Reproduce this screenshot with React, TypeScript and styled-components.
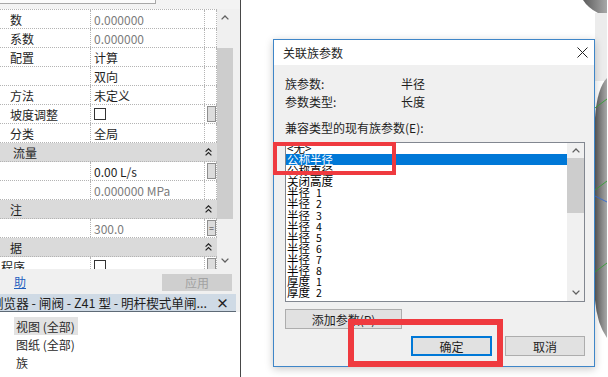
import React from "react";
import styled, { createGlobalStyle } from "styled-components";

const GlobalStyle = createGlobalStyle`
  html, body { margin: 0; padding: 0; width: 608px; height: 377px; overflow: hidden; background: #fff; }
  body { font-family: "Noto Sans CJK SC", "Noto Sans", sans-serif; font-size: 12px; color: #1e1e1e; }
  #root { width: 608px; height: 377px; }
  * { box-sizing: border-box; }
`;

const Page = styled.div`
  display: flex;
  width: 608px;
  height: 377px;
  overflow: hidden;
`;

/* ---------------- left: properties + project browser ---------------- */
const LeftPanel = styled.div`
  width: 241px;
  flex: none;
  display: flex;
  flex-direction: column;
  background: #f0f0f0;
  border-right: 1px solid #474747;
  overflow: hidden;
`;

const TopStrip = styled.div`
  height: 9px;
  flex: none;
  background: #f3f3f3;
`;

const TopBox = styled.div`
  width: 156px;
  height: 4px;
  background: #fbfbfb;
  border-right: 1px solid #a8a8a8;
  border-bottom: 1px solid #a8a8a8;
`;

const PropArea = styled.div`
  height: 260px;
  flex: none;
  display: flex;
  overflow: hidden;
`;

const RowsCol = styled.div`
  width: 217px;
  flex: none;
  background: #fff;
  overflow: hidden;
  border-top: 1px dotted #b4b4b4;
`;

const Row = styled.div`
  display: grid;
  grid-template-columns: 91px 114px 12px;
  height: 19px;
  border-bottom: 1px dotted #b4b4b4;
`;

const Cell = styled.div<{ $pad?: number; $gray?: boolean }>`
  display: flex;
  align-items: center;
  padding-left: ${(p) => p.$pad ?? 0}px;
  border-right: 1px dotted #b4b4b4;
  white-space: nowrap;
  overflow: hidden;
  color: ${(p) => (p.$gray ? "#7c7c7c" : "#1e1e1e")};
  font-size: 12px;
`;

const SectionRow = styled.div<{ $indent: number }>`
  display: flex;
  align-items: center;
  justify-content: space-between;
  height: 19px;
  padding: 0 5px 0 ${(p) => p.$indent}px;
  background: #dadada;
  border-bottom: 1px dotted #b4b4b4;
  font-size: 12px;
`;

const CheckBox = styled.span`
  width: 12px;
  height: 12px;
  border: 1px solid #333;
  background: #fff;
`;

const SmallBtn = styled.span`
  width: 9px;
  height: 16px;
  margin-left: 2px;
  background: #dcdcdc;
  border: 1px solid #8e8e8e;
  display: flex;
  align-items: center;
  justify-content: center;
  font-size: 9px;
  line-height: 1;
  color: #333;
`;

const PropScroll = styled.div`
  width: 16px;
  flex: none;
  display: flex;
  flex-direction: column;
  background: #f0f0f0;
`;

const ArrowBox = styled.div<{ $h: number }>`
  height: ${(p) => p.$h}px;
  flex: none;
  display: flex;
  align-items: center;
  justify-content: center;
`;

const Thumb = styled.div<{ $h: number }>`
  height: ${(p) => p.$h}px;
  flex: none;
  background: #cdcdcd;
`;

const Spacer = styled.div<{ $h?: number }>`
  ${(p) => (p.$h ? `height: ${p.$h}px; flex: none;` : "flex: 1;")}
`;

const Filler = styled.div`
  flex: 1;
  background: #f0f0f0;
`;

const ApplyBar = styled.div`
  height: 25px;
  flex: none;
  display: flex;
  align-items: center;
  justify-content: space-between;
  padding: 0 8px 0 14px;
  background: #f0f0f0;
`;

const HelpLink = styled.a`
  color: #1f5fbf;
  text-decoration: underline;
  font-size: 12px;
`;

const ApplyButton = styled.button`
  width: 70px;
  height: 17px;
  margin-top: 1px;
  border: none;
  background: #cfcfcf;
  color: #a2a2a2;
  font-family: inherit;
  font-size: 12px;
  padding: 0;
`;

const BrowserHeader = styled.div`
  height: 18px;
  flex: none;
  margin-right: 4px;
  display: flex;
  align-items: center;
  justify-content: space-between;
  padding-right: 7px;
  background: #cfdae5;
  border-bottom: 1px solid #5e6a76;
  overflow: hidden;
  white-space: nowrap;
`;

const HeaderText = styled.span`
  margin-left: -9px;
  font-size: 12.6px;
  color: #1e1e1e;
`;

const HeaderClose = styled.span`
  font-size: 13px;
  font-weight: bold;
  color: #222;
`;

const Tree = styled.div`
  flex: 1;
  background: #fff;
  padding-top: 5px;
  display: flex;
  flex-direction: column;
  align-items: flex-start;
`;

const TreeItem = styled.div<{ $selected?: boolean }>`
  height: 18px;
  display: flex;
  align-items: center;
  margin-left: 14px;
  padding: 0 3px 0 2px;
  background: ${(p) => (p.$selected ? "#e2e2e2" : "transparent")};
  color: #2a2a2a;
  font-size: 12px;
`;

/* ---------------- right: 3D view + dialog ---------------- */
const Viewport = styled.div`
  flex: 1;
  position: relative;
  background: #fff;
`;

const ViewCanvas = styled.svg`
  position: absolute;
  inset: 0;
`;

const Dialog = styled.div`
  position: absolute;
  left: 32px;
  top: 39px;
  width: 322px;
  height: 328px;
  border: 1px solid #3f86c8;
  background: #f0f0f0;
  display: flex;
  flex-direction: column;
  box-shadow: 0 2px 8px rgba(0, 0, 0, 0.22);
`;

const TitleBar = styled.div`
  height: 25px;
  flex: none;
  background: #fff;
  display: flex;
  align-items: center;
  justify-content: space-between;
  padding: 0 6px 0 9px;
  font-size: 12px;
  color: #1e1e1e;
`;

const DialogBody = styled.div`
  flex: 1;
  display: flex;
  flex-direction: column;
  padding: 9px 9px 10px 11px;
`;

const ParamRow = styled.div`
  display: grid;
  grid-template-columns: 116px 1fr;
  height: 18px;
  align-items: center;
  font-size: 12px;
`;

const ListLabel = styled.div`
  margin-top: 8px;
  height: 18px;
  display: flex;
  align-items: center;
  font-size: 12px;
`;

const ListBox = styled.div`
  margin-top: 6px;
  height: 160px;
  flex: none;
  display: flex;
  border: 1px solid #828790;
  background: #fff;
`;

const ListItems = styled.div`
  flex: 1;
  overflow: hidden;
  display: flex;
  flex-direction: column;
`;

const ListItem = styled.div<{ $selected?: boolean }>`
  height: 11.1px;
  flex: none;
  display: flex;
  align-items: center;
  padding-left: 1px;
  white-space: pre;
  font-size: 11.5px;
  line-height: 11.1px;
  color: ${(p) => (p.$selected ? "#ffffff" : "#000")};
  background: ${(p) => (p.$selected ? "#0078d7" : "transparent")};
`;

const ItemNum = styled.span`
  margin-left: 6px;
  font-size: 10.5px;
`;

const ListScroll = styled.div`
  width: 17px;
  flex: none;
  display: flex;
  flex-direction: column;
  background: #f0f0f0;
`;

const DlgButton = styled.button<{ $w: number; $primary?: boolean }>`
  width: ${(p) => p.$w}px;
  height: 20px;
  padding: 0;
  background: #e1e1e1;
  border: 1px solid ${(p) => (p.$primary ? "#0078d7" : "#adadad")};
  box-shadow: ${(p) => (p.$primary ? "inset 0 0 0 1px #0078d7" : "none")};
  font-family: inherit;
  font-size: 12px;
  color: #1e1e1e;
`;

const AddRow = styled.div`
  margin-top: 7px;
  display: flex;
`;

const ButtonRow = styled.div`
  margin-top: 7px;
  display: flex;
  justify-content: flex-end;
  gap: 13px;
`;

const RedBox = styled.div<{ $l: number; $t: number; $w: number; $h: number; $b: number }>`
  position: absolute;
  left: ${(p) => p.$l}px;
  top: ${(p) => p.$t}px;
  width: ${(p) => p.$w}px;
  height: ${(p) => p.$h}px;
  border: ${(p) => p.$b}px solid #ef3a3f;
  pointer-events: none;
`;

/* ---------------- icons ---------------- */
const ChevronUp = ({ color = "#606060" }: { color?: string }) => (
  <svg width="8" height="5" viewBox="0 0 8 5">
    <polyline points="0.6,4.4 4,1 7.4,4.4" fill="none" stroke={color} strokeWidth="1.3" />
  </svg>
);

const ChevronDown = ({ color = "#606060" }: { color?: string }) => (
  <svg width="8" height="5" viewBox="0 0 8 5">
    <polyline points="0.6,0.6 4,4 7.4,0.6" fill="none" stroke={color} strokeWidth="1.3" />
  </svg>
);

const DoubleChevron = () => (
  <svg width="7" height="8" viewBox="0 0 7 8">
    <polyline points="0.6,3.6 3.5,0.8 6.4,3.6" fill="none" stroke="#222" strokeWidth="1.2" />
    <polyline points="0.6,7.4 3.5,4.6 6.4,7.4" fill="none" stroke="#222" strokeWidth="1.2" />
  </svg>
);

const CloseX = () => (
  <svg width="11" height="11" viewBox="0 0 11 11">
    <line x1="0.5" y1="0.5" x2="10.5" y2="10.5" stroke="#222" strokeWidth="1" />
    <line x1="10.5" y1="0.5" x2="0.5" y2="10.5" stroke="#222" strokeWidth="1" />
  </svg>
);

type PropRow =
  | { kind: "row"; label: string; value?: string; gray?: boolean; check?: boolean; btn?: string }
  | { kind: "section"; label: string; indent: number };

const propRows: PropRow[] = [
  { kind: "row", label: "数", value: "0.000000", gray: true },
  { kind: "row", label: "系数", value: "0.000000", gray: true },
  { kind: "row", label: "配置", value: "计算" },
  { kind: "row", label: "", value: "双向" },
  { kind: "row", label: "方法", value: "未定义" },
  { kind: "row", label: "坡度调整", check: true, btn: "" },
  { kind: "row", label: "分类", value: "全局" },
  { kind: "section", label: "流量", indent: 13 },
  { kind: "row", label: "", value: "0.00 L/s", btn: "" },
  { kind: "row", label: "", value: "0.000000 MPa", gray: true },
  { kind: "section", label: "注", indent: 10 },
  { kind: "row", label: "", value: "300.0", gray: true, btn: "=" },
  { kind: "section", label: "据", indent: 10 },
  { kind: "row", label: "程序", check: true, btn: "" },
];

const listItems: [string, string?][] = [
  ["<无>"],
  ["公称半径"],
  ["公称直径"],
  ["关闭高度"],
  ["半径", "1"],
  ["半径", "2"],
  ["半径", "3"],
  ["半径", "4"],
  ["半径", "5"],
  ["半径", "6"],
  ["半径", "7"],
  ["半径", "8"],
  ["厚度", "1"],
  ["厚度", "2"],
];

export default function App() {
  return (
    <>
      <GlobalStyle />
      <Page>
        <LeftPanel>
          <TopStrip>
            <TopBox />
          </TopStrip>
          <PropArea>
            <RowsCol>
              {propRows.map((r, i) =>
                r.kind === "section" ? (
                  <SectionRow key={i} $indent={r.indent}>
                    <span>{r.label}</span>
                    <DoubleChevron />
                  </SectionRow>
                ) : (
                  <Row key={i}>
                    <Cell $pad={r.label === "程序" ? 1 : 10}>{r.label}</Cell>
                    <Cell $pad={3} $gray={r.gray}>
                      {r.check ? <CheckBox /> : r.value}
                    </Cell>
                    <Cell>{r.btn !== undefined && <SmallBtn>{r.btn}</SmallBtn>}</Cell>
                  </Row>
                )
              )}
            </RowsCol>
            <PropScroll>
              <ArrowBox $h={17}>
                <ChevronUp />
              </ArrowBox>
              <Spacer $h={22} />
              <Thumb $h={171} />
              <Spacer />
              <ArrowBox $h={17}>
                <ChevronDown />
              </ArrowBox>
            </PropScroll>
            <Filler />
          </PropArea>
          <ApplyBar>
            <HelpLink>助</HelpLink>
            <ApplyButton>应用</ApplyButton>
          </ApplyBar>
          <BrowserHeader>
            <HeaderText>浏览器 - 闸阀 - Z41 型 - 明杆楔式单闸...</HeaderText>
            <HeaderClose>×</HeaderClose>
          </BrowserHeader>
          <Tree>
            <TreeItem $selected>视图 (全部)</TreeItem>
            <TreeItem>图纸 (全部)</TreeItem>
            <TreeItem>族</TreeItem>
          </Tree>
        </LeftPanel>

        <Viewport>
          <ViewCanvas width="366" height="377" viewBox="0 0 366 377">
            <defs>
              <linearGradient id="shade" x1="0" x2="1" y1="0" y2="0">
                <stop offset="0" stopColor="#5c5c5c" />
                <stop offset="1" stopColor="#a8a8a8" />
              </linearGradient>
            </defs>
            <path d="M342 0 L366 0 L366 13 L357 13 Q347 8 342 0 Z" fill="url(#shade)" />
            <rect x="354" y="13" width="12" height="68" fill="#ececec" />
            <path d="M366 78 Q356 88 354 118 L354 300 Q356 324 366 338 Z" fill="url(#shade)" />
            <line x1="354" y1="108" x2="366" y2="99" stroke="#3f9e3f" strokeWidth="1" />
            <line x1="354" y1="190" x2="366" y2="181" stroke="#3f9e3f" strokeWidth="1" />
            <line x1="354" y1="196" x2="366" y2="202" stroke="#3f6fd0" strokeWidth="1" />
            <line x1="354" y1="272" x2="366" y2="263" stroke="#3f9e3f" strokeWidth="1" />
          </ViewCanvas>

          <Dialog>
            <TitleBar>
              <span>关联族参数</span>
              <CloseX />
            </TitleBar>
            <DialogBody>
              <ParamRow>
                <span>族参数:</span>
                <span>半径</span>
              </ParamRow>
              <ParamRow>
                <span>参数类型:</span>
                <span>长度</span>
              </ParamRow>
              <ListLabel>兼容类型的现有族参数(E):</ListLabel>
              <ListBox>
                <ListItems>
                  {listItems.map(([t, n], i) => (
                    <ListItem key={i} $selected={i === 1}>
                      {t}
                      {n && <ItemNum>{n}</ItemNum>}
                    </ListItem>
                  ))}
                </ListItems>
                <ListScroll>
                  <ArrowBox $h={15}>
                    <ChevronUp />
                  </ArrowBox>
                  <Thumb $h={55} />
                  <Spacer />
                  <ArrowBox $h={17}>
                    <ChevronDown />
                  </ArrowBox>
                </ListScroll>
              </ListBox>
              <AddRow>
                <DlgButton $w={117}>添加参数(P)</DlgButton>
              </AddRow>
              <ButtonRow>
                <DlgButton $w={81} $primary>
                  确定
                </DlgButton>
                <DlgButton $w={80}>取消</DlgButton>
              </ButtonRow>
            </DialogBody>
          </Dialog>

          <RedBox $l={32} $t={142} $w={123} $h={33} $b={4} />
          <RedBox $l={107} $t={319} $w={155} $h={48} $b={6} />
        </Viewport>
      </Page>
    </>
  );
}
